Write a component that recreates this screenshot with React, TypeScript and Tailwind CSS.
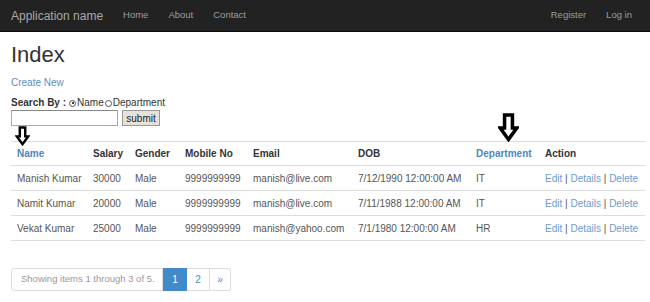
import React from "react";

const Arrow = ({ w, h }: { w: number; h: number }) => (
  <svg width={w} height={h} viewBox="0 0 20 28">
    <path
      d="M6.2 2 H13.8 V14.5 H18 L10 25.5 L2 14.5 H6.2 Z"
      fill="white"
      stroke="black"
      strokeWidth="3.4"
      strokeLinejoin="miter"
    />
  </svg>
);

const rows = [
  ["Manish Kumar", "30000", "Male", "9999999999", "manish@live.com", "7/12/1990 12:00:00 AM", "IT"],
  ["Namit Kumar", "20000", "Male", "9999999999", "manish@live.com", "7/11/1988 12:00:00 AM", "IT"],
  ["Vekat Kumar", "25000", "Male", "9999999999", "manish@yahoo.com", "7/1/1980 12:00:00 AM", "HR"],
];

const widths = ["w-[76px]", "w-[42px]", "w-[50px]", "w-[68px]", "w-[105px]", "w-[118px]", "w-[69px]", "w-[106px]"];

export default function App() {
  return (
    <div className="w-[650px] h-[302px] bg-white overflow-hidden" style={{ fontFamily: '"Liberation Sans", Arial, sans-serif' }}>
      <div className="h-[32px] bg-[#222222] border-b border-[#080808] flex items-center pl-[11px] pr-[18px]">
        <span className="text-[12px] text-[#a8a8a8] mr-[20px]">Application name</span>
        <span className="text-[9.5px] text-[#9d9d9d] mr-[20px]">Home</span>
        <span className="text-[9.5px] text-[#9d9d9d] mr-[20px]">About</span>
        <span className="text-[9.5px] text-[#9d9d9d]">Contact</span>
        <span className="ml-auto text-[9.5px] text-[#9d9d9d] mr-[20px]">Register</span>
        <span className="text-[9.5px] text-[#9d9d9d]">Log in</span>
      </div>
      <div className="px-[11px]">
        <div className="text-[22px] text-[#333] leading-none mt-[12px]">Index</div>
        <div className="text-[10px] text-[#5b8fc2] mt-[12px] leading-none">Create New</div>
        <div className="mt-[10px] flex items-center text-[10px] text-[#333] leading-none">
          <span className="font-bold mr-[3px]">Search By :</span>
          <span className="inline-block w-[7px] h-[7px] rounded-full border border-[#555] mr-[1px] relative">
            <span className="absolute left-[1.5px] top-[1.5px] w-[2px] h-[2px] rounded-full bg-black" />
          </span>
          <span>Name</span>
          <span className="inline-block w-[7px] h-[7px] rounded-full border border-[#555] ml-[1px] mr-[1px]" />
          <span>Department</span>
        </div>
        <div className="flex items-center mt-[2px]">
          <div className="w-[107px] h-[16px] border border-[#aaa] border-t-[#888] bg-white" />
          <div className="ml-[4px] h-[16px] w-[38px] bg-[#e5e2dc] border border-[#999] flex items-center justify-center text-[10px] text-[#222]">submit</div>
        </div>
        <div className="relative h-[0px]">
          <div className="absolute left-[4px] top-[0px]"><Arrow w={15} h={20} /></div>
          <div className="absolute left-[487px] top-[-13px]"><Arrow w={21} h={29} /></div>
        </div>
        <div className="mt-[15px] w-[634px] border-t border-[#dddddd] text-[10px]">
          <div className="flex h-[24px] items-center border-b border-[#dddddd] font-bold text-[#333]">
            {["Name", "Salary", "Gender", "Mobile No", "Email", "DOB", "Department", "Action"].map((h, i) => (
              <div key={h} className={`${widths[i]} pl-[6px] ${h === "Name" || h === "Department" ? "text-[#4d87bf]" : ""}`}>{h}</div>
            ))}
          </div>
          {rows.map((r, ri) => (
            <div key={ri} className="flex h-[25px] items-center border-b border-[#dddddd] text-[#555]">
              {r.map((c, i) => (
                <div key={i} className={`${widths[i]} pl-[6px] whitespace-nowrap`}>{c}</div>
              ))}
              <div className={`${widths[7]} pl-[6px] whitespace-nowrap text-[#6b9bd0]`}>
                Edit <span className="text-[#555]">|</span> Details <span className="text-[#555]">|</span> Delete
              </div>
            </div>
          ))}
        </div>
        <div className="mt-[27px] flex h-[23px] text-[10px]">
          <div className="w-[152px] border border-[#ddd] rounded-l-[3px] flex items-center pl-[9px] text-[9.5px] text-[#999] whitespace-nowrap">Showing items 1 through 3 of 5.</div>
          <div className="w-[24px] bg-[#428bca] border border-[#428bca] flex items-center justify-center text-white">1</div>
          <div className="w-[23px] border border-[#ddd] border-l-0 flex items-center justify-center text-[#428bca]">2</div>
          <div className="w-[21px] border border-[#ddd] border-l-0 rounded-r-[3px] flex items-center justify-center text-[#428bca]">»</div>
        </div>
      </div>
    </div>
  );
}
